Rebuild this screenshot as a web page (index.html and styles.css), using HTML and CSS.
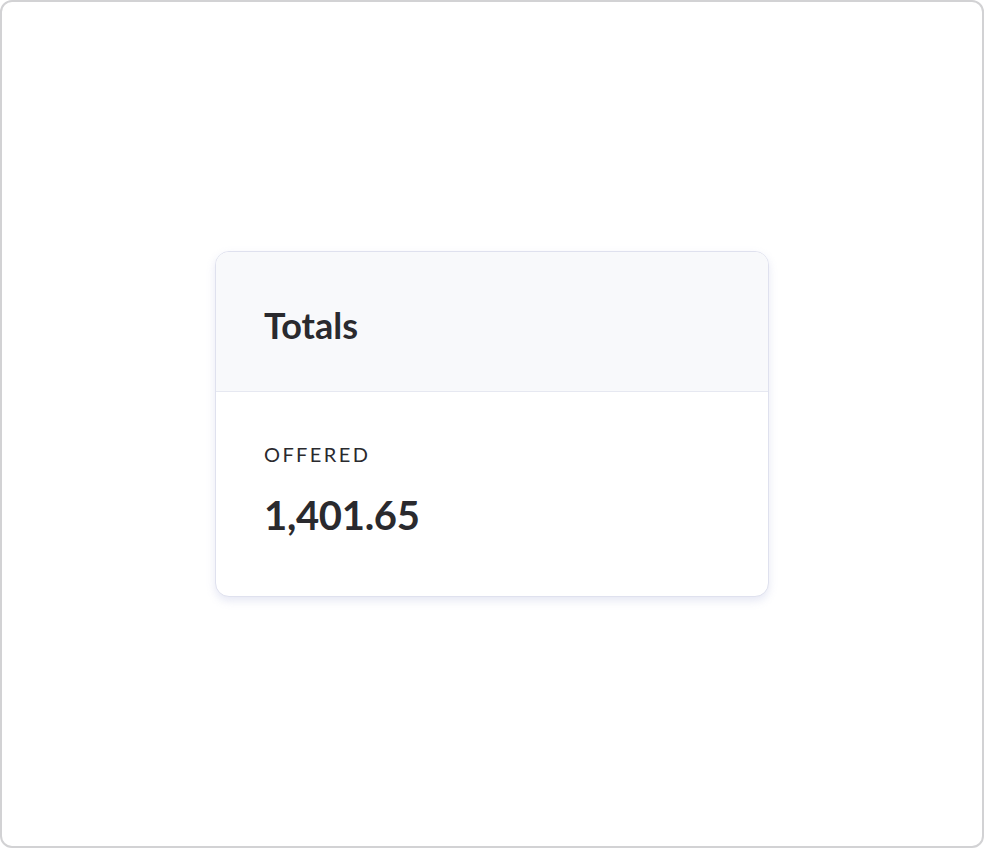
FILE: index.html
```html
<!DOCTYPE html>
<html>
<head>
<meta charset="utf-8">
<link rel="stylesheet" href="styles.css">
</head>
<body>
<div class="frame">
  <div class="card">
    <div class="card-header">
      <h2 class="title">Totals</h2>
    </div>
    <div class="card-body">
      <div class="label">OFFERED</div>
      <div class="value">1,401.65</div>
    </div>
  </div>
</div>
</body>
</html>
```

FILE: styles.css
```css
html, body {
  margin: 0;
  padding: 0;
  background: #ffffff;
}
.frame {
  box-sizing: border-box;
  width: 984px;
  height: 848px;
  border: 2px solid #d2d2d4;
  border-radius: 12px;
  display: flex;
  align-items: center;
  justify-content: center;
  font-family: "Lato", "Inter", sans-serif;
  color: #2a2a2e;
}
.card {
  box-sizing: border-box;
  width: 554px;
  border: 1px solid #dfe1ee;
  border-radius: 14px;
  background: #ffffff;
  box-shadow: 0 4px 8px rgba(200, 204, 230, 0.45);
  overflow: hidden;
}
.card-header {
  background: #f8f9fb;
  border-bottom: 1px solid #e6e8f1;
  padding: 51px 48px 44px;
}
.title {
  margin: 0;
  font-size: 36px;
  line-height: 44px;
  font-weight: 700;
}
.card-body {
  padding: 50px 48px 57px;
}
.label {
  font-size: 20px;
  line-height: 24px;
  letter-spacing: 2.4px;
  font-weight: 400;
}
.value {
  margin-top: 25px;
  font-size: 40px;
  line-height: 48px;
  letter-spacing: -0.3px;
  font-weight: 700;
}
```
